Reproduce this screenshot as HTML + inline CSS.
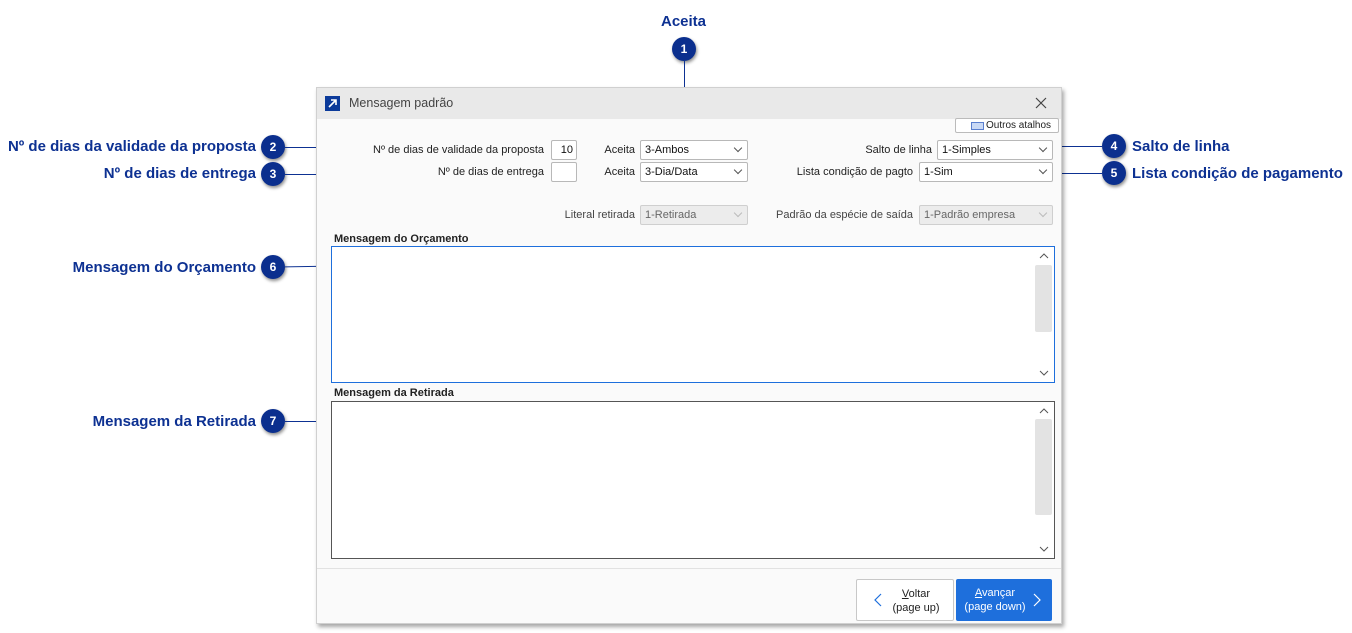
<!DOCTYPE html>
<html><head><meta charset="utf-8"><style>
*{box-sizing:border-box;margin:0;padding:0}
body{width:1352px;height:633px;background:#fff;position:relative;overflow:hidden;font-family:"Liberation Sans",sans-serif}
.a{position:absolute}
.lbl{position:absolute;color:#0d3192;font-weight:bold;font-size:15px;white-space:nowrap}
.b{position:absolute;width:24px;height:24px;border-radius:50%;background:#0b2f8e;color:#fff;font-size:12px;font-weight:bold;text-align:center;line-height:24px;box-shadow:1px 2px 3px rgba(0,0,0,.45)}
.ln{position:absolute;background:#0d3192;height:1px}
.t{position:absolute;font-size:11px;color:#222;white-space:nowrap}
.r{text-align:right}
.in{position:absolute;border:1px solid #b8b8b8;background:#fff;border-radius:2px;height:20px;font-size:11px;line-height:18px;padding-left:4px;color:#111}
.in.dis{background:#ececec;color:#666;border-color:#cfcfcf}
.chev{position:absolute;right:6px;top:4px;width:6px;height:6px;border-right:1px solid #555;border-bottom:1px solid #555;transform:rotate(45deg)}
.dis .chev{border-color:#bbb}
.ta{position:absolute;background:#fff}
.sb{position:absolute;right:2px;width:17px;background:#e3e3e3;border-radius:2px}
</style></head><body>

<div class="lbl" style="left:661px;top:13px">Aceita</div>
<div class="b" style="left:672px;top:37px">1</div>
<div class="a" style="left:684px;top:61px;width:1px;height:72px;background:#0d3192"></div>

<div class="lbl r" style="right:1096px;top:138px">Nº de dias da validade da proposta</div>
<div class="b" style="left:261px;top:135px">2</div>
<div class="ln" style="left:285px;top:147px;width:80px"></div>
<div class="lbl r" style="right:1096px;top:165px">Nº de dias de entrega</div>
<div class="b" style="left:261px;top:162px">3</div>
<div class="ln" style="left:285px;top:174px;width:143px"></div>
<div class="lbl r" style="right:1096px;top:259px">Mensagem do Orçamento</div>
<div class="b" style="left:261px;top:255px">6</div>
<div class="ln" style="left:285px;top:266px;width:46px;transform:rotate(-1deg)"></div>
<div class="lbl r" style="right:1096px;top:413px">Mensagem da Retirada</div>
<div class="b" style="left:261px;top:409px">7</div>
<div class="ln" style="left:285px;top:421px;width:46px"></div>

<div class="lbl" style="left:1132px;top:138px">Salto de linha</div>
<div class="b" style="left:1102px;top:134px">4</div>
<div class="ln" style="left:1050px;top:146px;width:52px"></div>
<div class="lbl" style="left:1132px;top:165px">Lista condição de pagamento</div>
<div class="b" style="left:1102px;top:161px">5</div>
<div class="ln" style="left:1060px;top:173px;width:42px"></div>

<div class="a" style="left:316px;top:87px;width:746px;height:537px;background:#fafafa;border:1px solid #d0d0d0;box-shadow:2px 3px 4px rgba(0,0,0,.35)">
 <div class="a" style="left:0;top:0;width:744px;height:31px;background:#e9e9e9"></div>
 <div class="a" style="left:8px;top:8px;width:15px;height:15px;background:#0b3a9a"><svg width="15" height="15"><path d="M4 11 L11 4 M6 4 H11 V9" stroke="#fff" stroke-width="1.6" fill="none"/></svg></div>
 <div class="t" style="left:32px;top:8px;font-size:12.5px;color:#444">Mensagem padrão</div>
 <svg class="a" style="left:718px;top:9px" width="12" height="12"><path d="M1 1L11 11M11 1L1 11" stroke="#444" stroke-width="1.2"/></svg>
 <div class="a" style="left:638px;top:30px;width:104px;height:15px;border:1px solid #bbb;background:#fff;border-radius:2px;font-size:10px;line-height:13px;padding-left:30px;color:#222">Outros atalhos</div>
 <div class="a" style="left:654px;top:34px;width:13px;height:8px;border:1px solid #5a7fcf;background:#c9d9f5"></div>

 <div class="t r" style="right:517px;top:56px">Nº de dias de validade da proposta</div>
 <div class="in" style="left:234px;top:52px;width:26px;text-align:right;padding-right:3px">10</div>
 <div class="t r" style="right:426px;top:56px">Aceita</div>
 <div class="in" style="left:323px;top:52px;width:108px">3-Ambos<i class="chev"></i></div>
 <div class="t r" style="right:517px;top:78px">Nº de dias de entrega</div>
 <div class="in" style="left:234px;top:74px;width:26px"></div>
 <div class="t r" style="right:426px;top:78px">Aceita</div>
 <div class="in" style="left:323px;top:74px;width:108px">3-Dia/Data<i class="chev"></i></div>

 <div class="t r" style="right:129px;top:56px">Salto de linha</div>
 <div class="in" style="left:620px;top:52px;width:116px">1-Simples<i class="chev"></i></div>
 <div class="t r" style="right:148px;top:78px">Lista condição de pagto</div>
 <div class="in" style="left:602px;top:74px;width:134px">1-Sim<i class="chev"></i></div>

 <div class="t r" style="right:426px;top:121px;color:#444">Literal retirada</div>
 <div class="in dis" style="left:323px;top:117px;width:108px">1-Retirada<i class="chev"></i></div>
 <div class="t r" style="right:148px;top:121px;color:#444">Padrão da espécie de saída</div>
 <div class="in dis" style="left:602px;top:117px;width:134px">1-Padrão empresa<i class="chev"></i></div>

 <div class="t" style="left:17px;top:145px;font-weight:bold">Mensagem do Orçamento</div>
 <div class="ta" style="left:14px;top:158px;width:724px;height:137px;border:1px solid #1e6fdc">
  <div class="sb" style="top:18px;height:67px"></div>
  <svg class="a" style="right:5px;top:6px" width="10" height="6"><path d="M1 5L5 1L9 5" stroke="#555" fill="none"/></svg>
  <svg class="a" style="right:5px;bottom:6px" width="10" height="6"><path d="M1 1L5 5L9 1" stroke="#555" fill="none"/></svg>
 </div>
 <div class="t" style="left:17px;top:299px;font-weight:bold">Mensagem da Retirada</div>
 <div class="ta" style="left:14px;top:313px;width:724px;height:158px;border:1px solid #555">
  <div class="sb" style="top:17px;height:96px"></div>
  <svg class="a" style="right:5px;top:6px" width="10" height="6"><path d="M1 5L5 1L9 5" stroke="#555" fill="none"/></svg>
  <svg class="a" style="right:5px;bottom:6px" width="10" height="6"><path d="M1 1L5 5L9 1" stroke="#555" fill="none"/></svg>
 </div>

 <div class="a" style="left:0;top:480px;width:744px;height:1px;background:#e2e2e2"></div>
 <div class="a" style="left:539px;top:491px;width:98px;height:42px;border:1px solid #c8c8c8;background:#fff;border-radius:2px;font-size:11px;text-align:center;line-height:14px;padding:7px 0 0 22px;color:#222"><u>V</u>oltar<br>(page up)</div>
 <svg class="a" style="left:557px;top:505px" width="8" height="14"><path d="M7 1L1 7L7 13" stroke="#1e6fdc" fill="none" stroke-width="1.2"/></svg>
 <div class="a" style="left:639px;top:491px;width:96px;height:42px;background:#1e6fdc;border-radius:2px;font-size:11px;text-align:center;line-height:14px;padding:7px 18px 0 0;color:#fff"><u>A</u>vançar<br>(page down)</div>
 <svg class="a" style="left:716px;top:505px" width="8" height="14"><path d="M1 1L7 7L1 13" stroke="#fff" fill="none" stroke-width="1.2"/></svg>
</div>
</body></html>
